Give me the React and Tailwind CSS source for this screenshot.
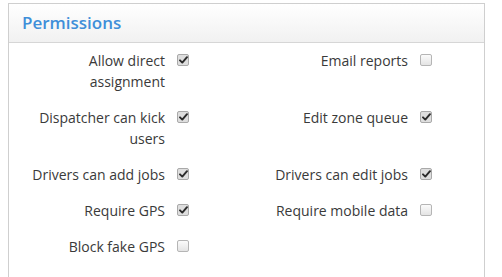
import React from "react";

const rows = [
  [
    { label: "Allow direct assignment", checked: true },
    { label: "Email reports", checked: false },
  ],
  [
    { label: "Dispatcher can kick users", checked: true },
    { label: "Edit zone queue", checked: true },
  ],
  [
    { label: "Drivers can add jobs", checked: true },
    { label: "Drivers can edit jobs", checked: true },
  ],
  [
    { label: "Require GPS", checked: true },
    { label: "Require mobile data", checked: false },
  ],
  [{ label: "Block fake GPS", checked: false }, null],
];

function Box({ checked }) {
  if (checked) {
    return (
      <span className="mt-[4px] flex h-[12px] w-[12px] shrink-0 items-center justify-center rounded-[2px] border border-[#a9a9a9] bg-[#dedede]">
        <svg width="9" height="8" viewBox="0 0 9 8">
          <path d="M1 4.3 L3.3 6.6 L8 1.2" fill="none" stroke="#2b2b2b" strokeWidth="1.9" strokeLinecap="round" strokeLinejoin="round" />
        </svg>
      </span>
    );
  }
  return (
    <span className="mt-[4px] block h-[12px] w-[12px] shrink-0 rounded-[2px] border border-[#b5b5b5] bg-gradient-to-b from-[#fbfbfb] to-[#e4e4e4]" />
  );
}

function Item({ item }) {
  if (!item) return <div />;
  return (
    <div className="flex items-start">
      <div className="w-[141px] text-right">{item.label}</div>
      <div className="ml-[12px]">
        <Box checked={item.checked} />
      </div>
    </div>
  );
}

export default function App() {
  return (
    <div className="h-[277px] overflow-hidden bg-white pt-[3px] pl-[8px] pr-[17px]" style={{ fontFamily: "'Open Sans', sans-serif" }}>
      <div className="h-[300px] border border-[#cfcfcf]">
        <div className="flex h-[39px] items-center border-b border-[#d6d6d6] bg-gradient-to-b from-[#ffffff] to-[#f1f1f1] pl-[13px]">
          <span className="-mt-[1px] text-[17px] font-semibold text-[#3f8fd9]">Permissions</span>
        </div>
        <div className="flex flex-col gap-[15px] pt-[7px] pl-[15px] text-[14px] leading-[21px] text-[#3a3a3a]">
          {rows.map((r, i) => (
            <div key={i} className="grid grid-cols-[243px_243px]">
              <Item item={r[0]} />
              <Item item={r[1]} />
            </div>
          ))}
        </div>
      </div>
    </div>
  );
}
